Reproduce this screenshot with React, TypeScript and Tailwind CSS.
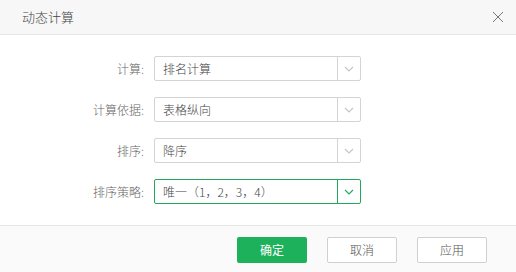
import React from "react";

const font = { fontFamily: '"Microsoft YaHei", "Noto Sans CJK SC", "Noto Sans", sans-serif' };

function Chevron({ color }: { color: string }) {
  return (
    <svg width="10" height="6" viewBox="0 0 10 6" fill="none">
      <path d="M1 1l4 4 4-4" stroke={color} strokeWidth="1.1" />
    </svg>
  );
}

function Row({ label, value, active }: { label: string; value: string; active?: boolean }) {
  return (
    <div className="flex items-center h-[25px]">
      <div className="w-[154px] pr-[10px] text-right text-[12px] font-light text-[#666]">{label}</div>
      <div
        className={`flex w-[207px] h-[25px] border rounded-[2px] ${
          active ? "border-[#21a85a]" : "border-[#d4d4d4]"
        }`}
      >
        <div className="flex-1 flex items-center pl-[8px] text-[12px] font-light text-[#444]">{value}</div>
        <div
          className={`w-[23px] flex items-center justify-center border-l ${
            active ? "border-[#21a85a]" : "border-[#d4d4d4]"
          }`}
        >
          <Chevron color={active ? "#21a85a" : "#c4c4c4"} />
        </div>
      </div>
    </div>
  );
}

export default function App() {
  return (
    <div className="w-[516px] h-[272px] bg-white flex flex-col" style={font}>
      <div className="h-[35px] bg-[#f7f7f7] border-b border-[#e6e6e6] flex items-center justify-between pl-[22px] pr-[12px]">
        <span className="text-[13px] font-light text-[#444]">动态计算</span>
        <svg width="12" height="12" viewBox="0 0 12 12">
          <path d="M1 1l10 10M11 1L1 11" stroke="#777" strokeWidth="1" />
        </svg>
      </div>
      <div className="flex flex-col gap-[16px] pt-[21px] pb-[20px] flex-1">
        <Row label="计算:" value="排名计算" />
        <Row label="计算依据:" value="表格纵向" />
        <Row label="排序:" value="降序" />
        <Row label="排序策略:" value="唯一（1，2，3，4）" active />
      </div>
      <div className="h-[47px] bg-[#fafafa] border-t border-[#e6e6e6] flex items-start pt-[11px] pl-[237px] gap-[20px]">
        <button className="w-[70px] h-[26px] rounded-[2px] bg-[#1eb15c] text-white text-[12px]">确定</button>
        <button className="w-[70px] h-[26px] rounded-[2px] bg-white border border-[#d0d0d0] text-[#555] font-light text-[12px]">取消</button>
        <button className="w-[70px] h-[26px] rounded-[2px] bg-white border border-[#d0d0d0] text-[#555] font-light text-[12px]">应用</button>
      </div>
    </div>
  );
}
